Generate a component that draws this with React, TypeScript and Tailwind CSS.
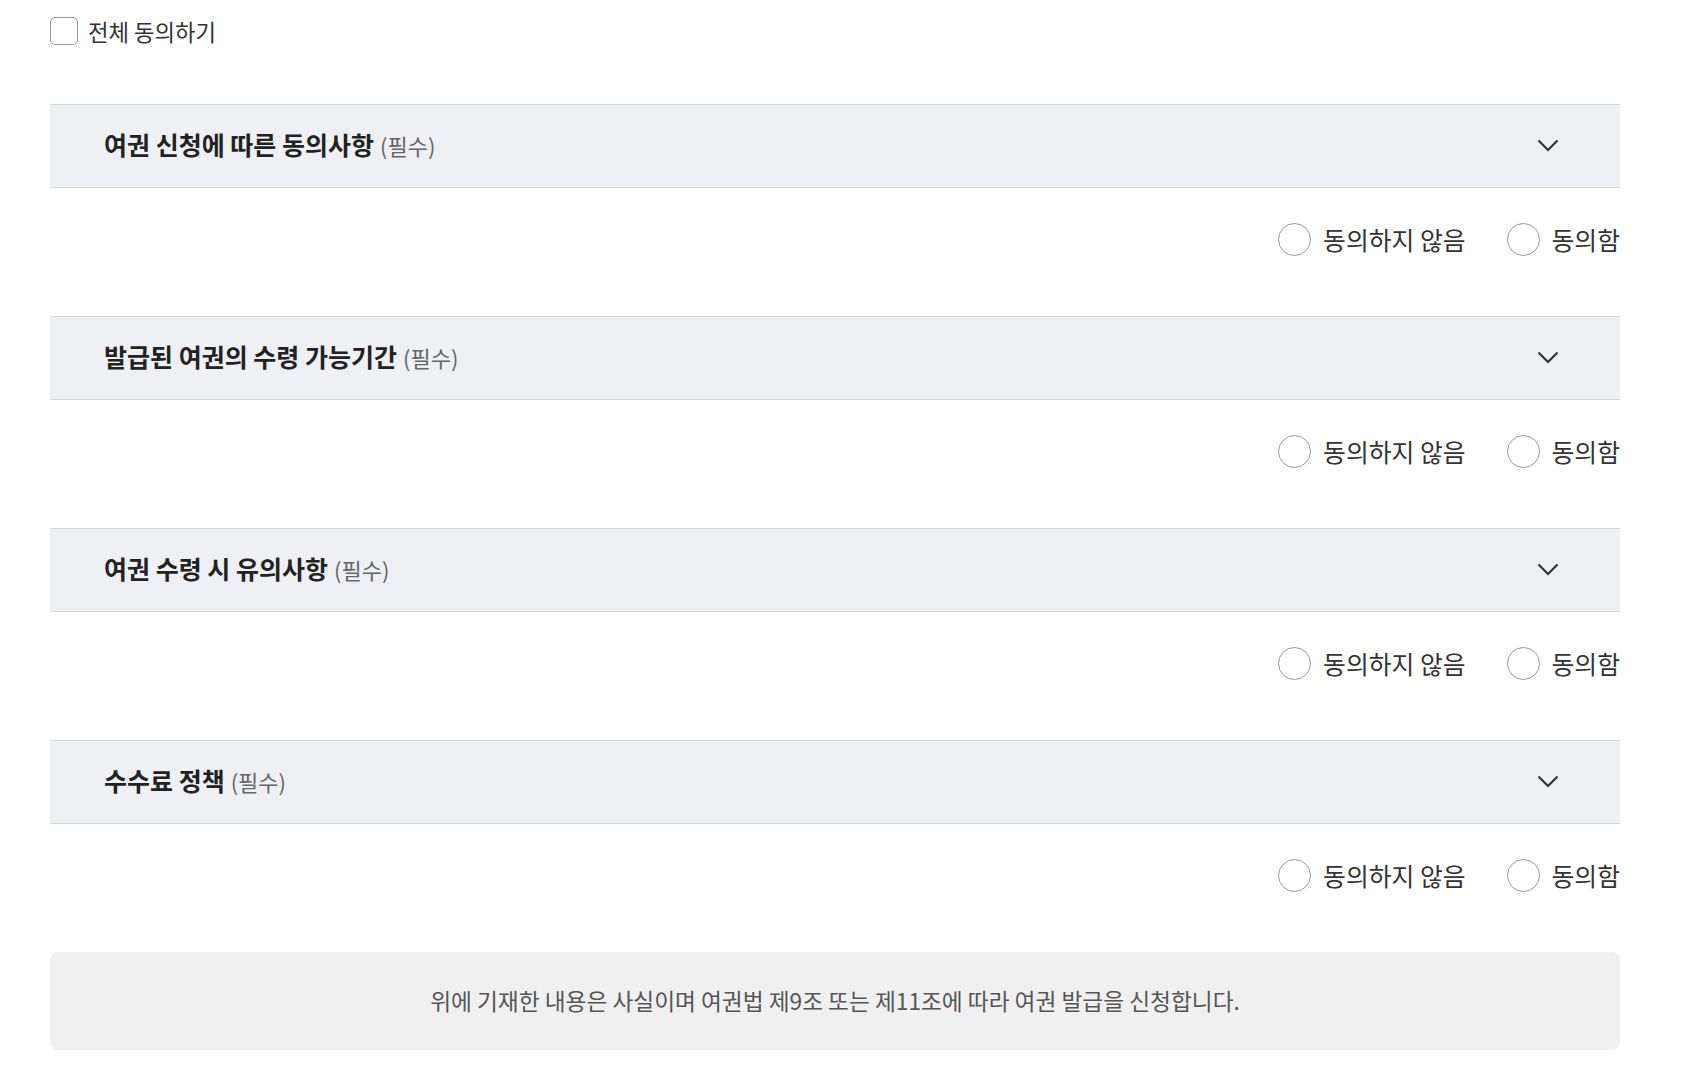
import { useState } from 'react'

const sections = [
  '여권 신청에 따른 동의사항',
  '발급된 여권의 수령 가능기간',
  '여권 수령 시 유의사항',
  '수수료 정책',
]

function Chevron() {
  return (
    <svg width="22" height="14" viewBox="0 0 22 14" fill="none" stroke="#333" strokeWidth="2.2">
      <polyline points="1.5,1.5 11,11 20.5,1.5" />
    </svg>
  )
}

function Radio({ label, checked, onClick }: { label: string; checked: boolean; onClick: () => void }) {
  return (
    <label className="flex items-center gap-[12px] cursor-pointer" onClick={onClick}>
      <span className="w-[33px] h-[33px] rounded-full border border-[#999] bg-white flex items-center justify-center">
        {checked && <span className="w-[15px] h-[15px] rounded-full bg-[#333]" />}
      </span>
      <span className="text-[24.8px] leading-none text-[#333]">{label}</span>
    </label>
  )
}

export default function App() {
  const [all, setAll] = useState(false)
  const [answers, setAnswers] = useState<Record<number, string>>({})

  return (
    <div
      className="bg-white min-h-[1080px] pt-[17px]"
      style={{ fontFamily: '"Noto Sans CJK KR", "Noto Sans", sans-serif' }}
    >
      <div className="ml-[50px] w-[1570px]">
        {/* 전체 동의 */}
        <label className="flex items-center gap-[10px] h-[28px] cursor-pointer" onClick={() => setAll(!all)}>
          <span className="w-[28px] h-[28px] rounded-[5px] border border-[#999] bg-white" />
          <span className="text-[22.3px] leading-none text-[#333]">전체 동의하기</span>
        </label>

        <div className="mt-[59px]">
          {sections.map((title, i) => (
            <div key={title}>
              <div className="h-[84px] bg-[#eef0f4] border-y border-[#d3d5d9] flex items-center justify-between pl-[54px] pr-[61px]">
                <p className="flex items-baseline gap-[6px] -mt-[3px]">
                  <span className="text-[25px] font-bold text-[#222]">{title}</span>
                  <span className="text-[22px] text-[#666]">(필수)</span>
                </p>
                <Chevron />
              </div>
              <div className="flex justify-end items-center gap-[41px] pt-[35px] pb-[60px]">
                <Radio
                  label="동의하지 않음"
                  checked={answers[i] === 'no'}
                  onClick={() => setAnswers({ ...answers, [i]: 'no' })}
                />
                <Radio
                  label="동의함"
                  checked={answers[i] === 'yes'}
                  onClick={() => setAnswers({ ...answers, [i]: 'yes' })}
                />
              </div>
            </div>
          ))}
        </div>

        <div className="h-[98px] rounded-[8px] bg-[#f0f0f0] flex items-center justify-center">
          <p className="text-[22.7px] text-[#555]">
            위에 기재한 내용은 사실이며 여권법 제9조 또는 제11조에 따라 여권 발급을 신청합니다.
          </p>
        </div>
      </div>
    </div>
  )
}
